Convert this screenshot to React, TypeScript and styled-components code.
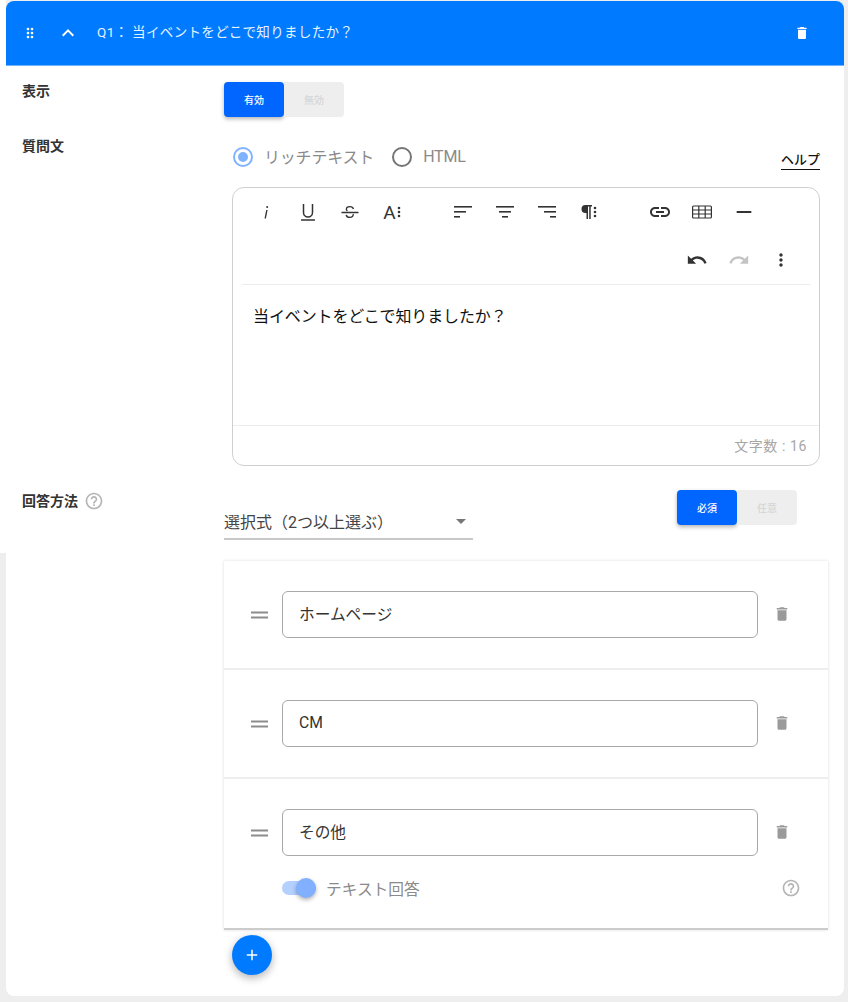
import React from "react";
import styled, { createGlobalStyle } from "styled-components";
import {
  MdAdd,
  MdArrowDropDown,
  MdDelete,
  MdDragIndicator,
  MdExpandLess,
  MdHelpOutline,
  MdHorizontalRule,
  MdLink,
  MdMoreVert,
  MdRedo,
  MdUndo,
} from "react-icons/md";

const Global = createGlobalStyle`
  html, body {
    margin: 0;
    padding: 0;
    height: 1002px;
    overflow: hidden;
    background: linear-gradient(#fff, #fff) 0 0 / 6px 553px no-repeat, #eeeeee;
    font-family: Roboto, "Noto Sans CJK JP", sans-serif;
    color: #222;
  }
  * { box-sizing: border-box; }
`;

const Card = styled.div`
  width: 838px;
  height: 995px;
  margin: 1px 0 0 6px;
  background: #fff;
  border-radius: 8px;
  overflow: hidden;
`;

const Header = styled.div`
  height: 65px;
  display: flex;
  align-items: center;
  background: #007bff;
  border-bottom: 1px solid #6db3ff;
  color: #fff;
`;

const HeaderIcon = styled.span<{ $w: number }>`
  width: ${(p) => p.$w}px;
  display: flex;
  justify-content: center;
  flex: none;
`;

const HeaderTitle = styled.div`
  flex: 1;
  font-size: 13.5px;
  letter-spacing: 0.35px;
  padding-left: 5px;
  color: #e6f2ff;
  margin-top: -5px;
`;

const Body = styled.div`
  padding: 16px 16px 0;
`;

const Row = styled.div<{ $mt?: number }>`
  display: grid;
  grid-template-columns: 202px 604px;
  margin-top: ${(p) => p.$mt || 0}px;
`;

const Label = styled.div<{ $pt?: number }>`
  display: flex;
  align-items: flex-start;
  gap: 6px;
  font-size: 14px;
  font-weight: 700;
  line-height: 20px;
  color: #333;
  margin-top: -1px;
  padding-top: ${(p) => p.$pt || 0}px;
`;

const HelpIcon = styled(MdHelpOutline)`
  color: #b5b5b5;
  flex: none;
`;

const ToggleWrap = styled.div<{ $mr?: number }>`
  display: flex;
  width: 120px;
  height: 35px;
  flex: none;
  margin-left: ${(p) => (p.$mr ? "auto" : "0")};
  margin-right: ${(p) => p.$mr || 0}px;
`;

const ToggleItem = styled.div<{ $on?: boolean }>`
  width: 60px;
  display: flex;
  align-items: center;
  justify-content: center;
  font-size: 10px;
  font-weight: 500;
  border-radius: ${(p) => (p.$on ? "4px" : "0 4px 4px 0")};
  background: ${(p) => (p.$on ? "#0066ff" : "#eeeeee")};
  color: ${(p) => (p.$on ? "#fff" : "#d6d6d6")};
  box-shadow: ${(p) => (p.$on ? "0 2px 4px rgba(0,0,0,0.3)" : "none")};
`;

const RadioRow = styled.div`
  display: flex;
  align-items: center;
  height: 32px;
  margin: 8px 8px 0 0;
  padding-left: 9px;
`;

const Radio = styled.span<{ $on?: boolean }>`
  width: 20px;
  height: 20px;
  border-radius: 50%;
  flex: none;
  display: flex;
  align-items: center;
  justify-content: center;
  border: 2px solid ${(p) => (p.$on ? "#80b3ff" : "#757575")};
  &::after {
    content: "";
    width: 10px;
    height: 10px;
    border-radius: 50%;
    background: ${(p) => (p.$on ? "#80b3ff" : "transparent")};
  }
`;

const RadioText = styled.span<{ $mr: number }>`
  font-size: 16px;
  letter-spacing: -0.2px;
  color: #8a8a8a;
  margin: -2px ${(p) => p.$mr}px 0 11px;
`;

const HelpLink = styled.span`
  margin-left: auto;
  margin-top: 6px;
  font-size: 13px;
  font-weight: 500;
  line-height: 18px;
  color: #111;
  border-bottom: 1px solid #111;
`;

const Editor = styled.div`
  margin: 14px 8px 0 8px;
  height: 279px;
  border: 1px solid #cfcfcf;
  border-radius: 12px;
  display: flex;
  flex-direction: column;
`;

const ToolRows = styled.div`
  margin: 0 9px;
  border-bottom: 1px solid #ececec;
  height: 97px;
`;

const ToolRow = styled.div<{ $end?: boolean }>`
  display: flex;
  height: 48px;
  padding: 0 ${(p) => (p.$end ? "8px" : "0")} 0 3px;
  justify-content: ${(p) => (p.$end ? "flex-end" : "flex-start")};
`;

const ToolGroup = styled.div`
  display: flex;
  margin-right: 29px;
`;

const ToolButton = styled.span<{ $off?: boolean }>`
  width: 42px;
  height: 48px;
  display: flex;
  align-items: center;
  justify-content: center;
  color: ${(p) => (p.$off ? "#c4c4c4" : "#333")};
`;

const GlyphIcon = styled.span`
  display: flex;
  align-items: center;
  gap: 1px;
  font-size: 19px;
  line-height: 1;
  color: #333;
`;

const EditorText = styled.div`
  flex: 1;
  padding: 20px 20px 0;
  font-size: 16px;
  letter-spacing: -0.12px;
  line-height: 24px;
  color: #111;
  border-bottom: 1px solid #ececec;
`;

const EditorFoot = styled.div`
  height: 39px;
  display: flex;
  align-items: center;
  justify-content: flex-end;
  padding: 0 12px 2px 0;
  font-size: 14px;
  letter-spacing: 0.6px;
  color: #a6a6a6;
`;

const MethodRow = styled.div`
  display: flex;
  align-items: flex-start;
`;

const Select = styled.div`
  width: 249px;
  height: 36px;
  margin-top: 14px;
  padding-bottom: 1px;
  display: flex;
  align-items: center;
  justify-content: space-between;
  border-bottom: 2px solid #c8c8c8;
  font-size: 16px;
  color: #444;
`;

const SelectArrow = styled(MdArrowDropDown)`
  color: #777;
`;

const Options = styled.div`
  margin-top: 21px;
  background: #fff;
  border-bottom: 2px solid #cccccc;
  box-shadow: 0 0 3px rgba(0, 0, 0, 0.14);
`;

const OptionRow = styled.div`
  padding: 30px 0 30px 27px;
  border-bottom: 2px solid #eeeeee;
  &:last-child {
    border-bottom: none;
    padding-bottom: 27px;
  }
`;

const OptionMain = styled.div`
  display: flex;
  align-items: center;
`;

const Handle = styled.svg`
  width: 17px;
  height: 8px;
  margin-right: 14px;
  flex: none;
  fill: #8c8c8c;
`;

const OptionInput = styled.input`
  width: 476px;
  height: 47px;
  padding: 0 16px 3px;
  border: 1px solid #a8a8a8;
  border-radius: 6px;
  outline: none;
  background: #fff;
  font: inherit;
  font-size: 15.7px;
  color: #333;
`;

const OptionTrash = styled(MdDelete)`
  color: #9a9a9a;
  margin: -2px 0 0 15px;
  flex: none;
`;

const SwitchRow = styled.div`
  display: flex;
  align-items: center;
  height: 26px;
  margin: 19px 27px 0 31px;
`;

const Switch = styled.span`
  position: relative;
  width: 34px;
  height: 14px;
  border-radius: 7px;
  background: #b3d0ff;
  flex: none;
  &::after {
    content: "";
    position: absolute;
    top: -3px;
    right: 0;
    width: 20px;
    height: 20px;
    border-radius: 50%;
    background: #80b0ff;
    box-shadow: 0 2px 4px rgba(0, 0, 0, 0.3);
  }
`;

const SwitchText = styled.span`
  flex: 1;
  margin-left: 10px;
  font-size: 15.7px;
  color: #8a8a8a;
`;

const Fab = styled.div`
  width: 40px;
  height: 40px;
  margin: 5px 0 0 8px;
  border-radius: 50%;
  background: #007bff;
  color: #fff;
  display: flex;
  align-items: center;
  justify-content: center;
  box-shadow: 0 3px 8px rgba(0, 0, 0, 0.3);
`;

const AlignIcon = ({ mode }: { mode: "left" | "center" | "right" }) => {
  const place = (w: number) => (mode === "left" ? 1 : mode === "center" ? 10 - w / 2 : 19 - w);
  return (
    <svg width="20" height="20" viewBox="0 0 20 20" fill="#333">
      <rect x={place(18)} y="4" width="18" height="1.6" />
      <rect x={place(12)} y="9" width="12" height="1.6" />
      <rect x={place(6)} y="14" width="6" height="1.6" />
    </svg>
  );
};

const Dots = () => (
  <svg width="4" height="12" viewBox="0 0 4 12" fill="#333">
    <circle cx="2" cy="2" r="1.3" />
    <circle cx="2" cy="6" r="1.3" />
    <circle cx="2" cy="10" r="1.3" />
  </svg>
);

const ItalicIcon = () => (
  <svg width="20" height="20" viewBox="0 0 20 20" fill="#333">
    <circle cx="11.2" cy="5" r="1" />
    <path d="M10.2 8h1.4l-1.7 8.5H8.5z" />
  </svg>
);

const UnderlineIcon = () => (
  <svg width="20" height="22" viewBox="0 0 20 22" fill="none" stroke="#333" strokeWidth="1.5">
    <path d="M5.5 3v8.5a4.5 4.5 0 0 0 9 0V3" />
    <path d="M3 19h14" />
  </svg>
);

const StrikeIcon = () => (
  <svg width="20" height="20" viewBox="0 0 20 20" fill="none" stroke="#333" strokeWidth="1.4">
    <path d="M13.5 7c-.4-1.6-1.8-2.4-3.6-2.4-2 0-3.5 1-3.5 2.6 0 .8.4 1.4 1 1.8" />
    <path d="M13.2 12.2c.3 1.8-1.2 3.2-3.3 3.2-2 0-3.4-1-3.7-2.6" />
    <path d="M1.5 10.5h17" />
  </svg>
);

const PilcrowIcon = () => (
  <svg width="11" height="16" viewBox="0 0 11 16" fill="#333">
    <path d="M4.5 1A4 4 0 0 0 4.5 9H5.5V15H7V2.4H8.2V15H9.7V2.4H11V1z" />
  </svg>
);

const TableIcon = () => (
  <svg width="22" height="20" viewBox="0 0 22 20" fill="none" stroke="#333" strokeWidth="1.2">
    <rect x="1.6" y="4" width="18.8" height="12" rx="1" />
    <path d="M1.6 8h18.8M1.6 12h18.8M7.8 4v12M14.2 4v12" />
  </svg>
);

const Toggle = ({ on, off, mr }: { on: string; off: string; mr?: number }) => (
  <ToggleWrap $mr={mr}>
    <ToggleItem $on>{on}</ToggleItem>
    <ToggleItem>{off}</ToggleItem>
  </ToggleWrap>
);

const Option = ({ value, children }: { value: string; children?: React.ReactNode }) => (
  <OptionRow>
    <OptionMain>
      <Handle viewBox="0 0 17 8">
        <rect y="0.5" width="17" height="2" />
        <rect y="5.5" width="17" height="2" />
      </Handle>
      <OptionInput readOnly value={value} />
      <OptionTrash size={18} />
    </OptionMain>
    {children}
  </OptionRow>
);

export default function App() {
  return (
    <>
      <Global />
      <Card>
        <Header>
          <HeaderIcon $w={48}>
            <MdDragIndicator size={16} />
          </HeaderIcon>
          <HeaderIcon $w={28}>
            <MdExpandLess size={24} />
          </HeaderIcon>
          <HeaderIcon $w={10} />
          <HeaderTitle>Q1： 当イベントをどこで知りましたか？</HeaderTitle>
          <HeaderIcon $w={84}>
            <MdDelete size={16} />
          </HeaderIcon>
        </Header>
        <Body>
          <Row>
            <Label>表示</Label>
            <Toggle on="有効" off="無効" />
          </Row>
          <Row $mt={16}>
            <Label $pt={4}>質問文</Label>
            <div>
              <RadioRow>
                <Radio $on />
                <RadioText $mr={18}>リッチテキスト</RadioText>
                <Radio />
                <RadioText $mr={0}>HTML</RadioText>
                <HelpLink>ヘルプ</HelpLink>
              </RadioRow>
              <Editor>
                <ToolRows>
                  <ToolRow>
                    <ToolGroup>
                      <ToolButton><ItalicIcon /></ToolButton>
                      <ToolButton><UnderlineIcon /></ToolButton>
                      <ToolButton><StrikeIcon /></ToolButton>
                      <ToolButton>
                        <GlyphIcon>A<Dots /></GlyphIcon>
                      </ToolButton>
                    </ToolGroup>
                    <ToolGroup>
                      <ToolButton><AlignIcon mode="left" /></ToolButton>
                      <ToolButton><AlignIcon mode="center" /></ToolButton>
                      <ToolButton><AlignIcon mode="right" /></ToolButton>
                      <ToolButton>
                        <GlyphIcon><PilcrowIcon /><Dots /></GlyphIcon>
                      </ToolButton>
                    </ToolGroup>
                    <ToolGroup>
                      <ToolButton><MdLink size={24} /></ToolButton>
                      <ToolButton><TableIcon /></ToolButton>
                      <ToolButton><MdHorizontalRule size={22} /></ToolButton>
                    </ToolGroup>
                  </ToolRow>
                  <ToolRow $end>
                    <ToolButton><MdUndo size={22} /></ToolButton>
                    <ToolButton $off><MdRedo size={22} /></ToolButton>
                    <ToolButton><MdMoreVert size={20} /></ToolButton>
                  </ToolRow>
                </ToolRows>
                <EditorText>当イベントをどこで知りましたか？</EditorText>
                <EditorFoot>文字数 : 16</EditorFoot>
              </Editor>
            </div>
          </Row>
          <Row $mt={24}>
            <Label $pt={2}>
              回答方法
              <HelpIcon size={20} />
            </Label>
            <div>
              <MethodRow>
                <Select>
                  選択式（2つ以上選ぶ）
                  <SelectArrow size={24} />
                </Select>
                <Toggle on="必須" off="任意" mr={31} />
              </MethodRow>
              <Options>
                <Option value="ホームページ" />
                <Option value="CM" />
                <Option value="その他">
                  <SwitchRow>
                    <Switch />
                    <SwitchText>テキスト回答</SwitchText>
                    <HelpIcon size={20} />
                  </SwitchRow>
                </Option>
              </Options>
              <Fab>
                <MdAdd size={18} />
              </Fab>
            </div>
          </Row>
        </Body>
      </Card>
    </>
  );
}
